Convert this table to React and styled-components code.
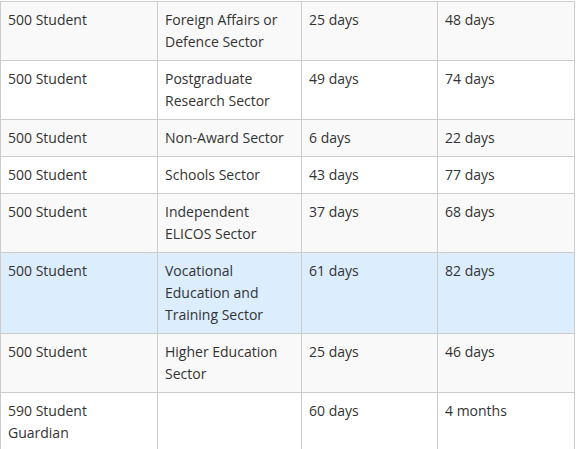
import React from "react";
import styled, { createGlobalStyle } from "styled-components";

const rows = [
  { visa: "500 Student", sector: "Foreign Affairs or Defence Sector", p75: "25 days", p90: "48 days" },
  { visa: "500 Student", sector: "Postgraduate Research Sector", p75: "49 days", p90: "74 days" },
  { visa: "500 Student", sector: "Non-Award Sector", p75: "6 days", p90: "22 days" },
  { visa: "500 Student", sector: "Schools Sector", p75: "43 days", p90: "77 days" },
  { visa: "500 Student", sector: "Independent ELICOS Sector", p75: "37 days", p90: "68 days" },
  { visa: "500 Student", sector: "Vocational Education and Training Sector", p75: "61 days", p90: "82 days", active: true },
  { visa: "500 Student", sector: "Higher Education Sector", p75: "25 days", p90: "46 days" },
  { visa: "590 Student Guardian", sector: "", p75: "60 days", p90: "4 months" },
];

const GlobalStyle = createGlobalStyle`
  body {
    margin: 0;
    background: #fff;
    font-family: "Open Sans", "Liberation Sans", sans-serif;
  }
`;

const Page = styled.div`
  padding-top: 1px;
`;

const Table = styled.table`
  width: 575px;
  border-collapse: collapse;
  table-layout: fixed;
  font-size: 14px;
  line-height: 22px;
  color: #333;
`;

const Row = styled.tr`
  background: ${(p) => (p.$active ? "#dcedfe" : p.$odd ? "#f9f9f9" : "#fff")};
`;

const Cell = styled.td`
  border: 1px solid #cccccc;
  padding: 7px 7px;
  vertical-align: top;
`;

const App = () => {
  return (
    <Page>
      <GlobalStyle />
      <Table>
        <colgroup>
          <col style={{ width: 157 }} />
          <col style={{ width: 144 }} />
          <col style={{ width: 136 }} />
          <col />
        </colgroup>
        <tbody>
          {rows.map((r, i) => (
            <Row key={i} $odd={i % 2 === 0} $active={r.active}>
              <Cell>{r.visa}</Cell>
              <Cell>{r.sector}</Cell>
              <Cell>{r.p75}</Cell>
              <Cell>{r.p90}</Cell>
            </Row>
          ))}
        </tbody>
      </Table>
    </Page>
  );
};

export default App;
